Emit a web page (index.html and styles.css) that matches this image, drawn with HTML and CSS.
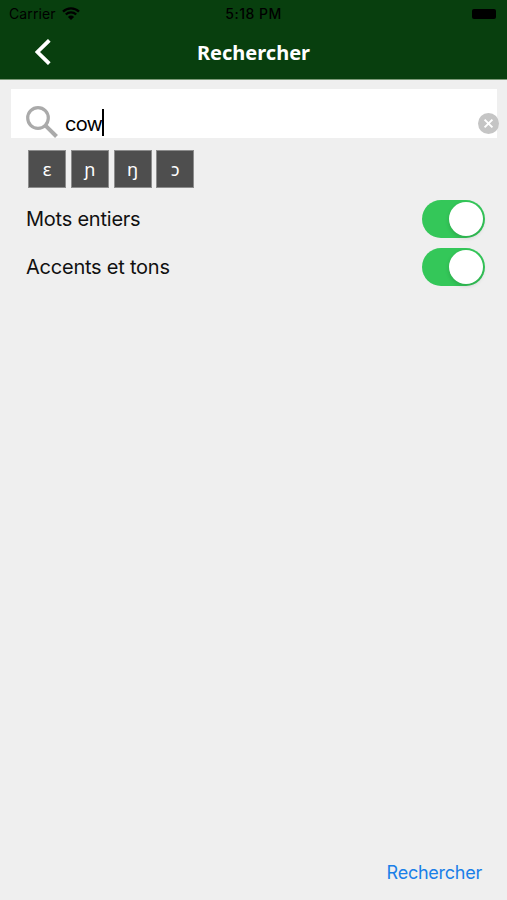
FILE: index.html
```html
<!DOCTYPE html>
<html lang="fr">
    <head>
        <meta charset="UTF-8">
        <meta name="viewport" content="width=device-width, initial-scale=1.0">
        <title>Rechercher</title>
        <link rel="stylesheet" href="styles.css">
    </head>
    <body>
        <header class="header">
            <div class="status-bar">
                <div class="carrier">
                    <span>Carrier</span>
                    <svg class="wifi" viewBox="0 0 18 13" width="18" height="13">
                        <path d="M1 4.6a11.5 11.5 0 0 1 16 0M3.8 7.5a7.4 7.4 0 0 1 10.4 0" fill="none" stroke="#000" stroke-width="2.3"/>
                        <path d="M9 13L5.9 9.9a4.4 4.4 0 0 1 6.2 0z" fill="#000"/>
                    </svg>
                </div>
                <span class="clock">5:18 PM</span>
                <div class="battery"></div>
            </div>
            <div class="title-bar">
                <a class="back" href="#" aria-label="Retour">
                    <svg viewBox="0 0 16 26" width="16" height="26">
                        <path d="M14.3 1.3L2.4 13l11.9 11.7" fill="none" stroke="#fff" stroke-width="3.8"/>
                    </svg>
                </a>
                <h1>Rechercher</h1>
            </div>
        </header>

        <main class="content">
            <div class="search-box">
                <svg class="search-icon" viewBox="0 0 32 32" width="32" height="32">
                    <circle cx="12" cy="12" r="10.3" fill="none" stroke="#aaa" stroke-width="3.2"/>
                    <path d="M19.8 19.8L30.5 30.5" stroke="#aaa" stroke-width="4"/>
                </svg>
                <span class="query">cow</span>
                <span class="caret"></span>
                <button class="clear-btn" aria-label="Effacer">
                    <svg viewBox="0 0 21 21" width="21" height="21">
                        <circle cx="10.5" cy="10.5" r="10.5" fill="#c5c5c5"/>
                        <path d="M6.6 6.6l7.8 7.8M14.4 6.6l-7.8 7.8" stroke="#fff" stroke-width="2"/>
                    </svg>
                </button>
            </div>

            <div class="keys">
                <button class="key">ɛ</button>
                <button class="key">ɲ</button>
                <button class="key">ŋ</button>
                <button class="key">ɔ</button>
            </div>

            <div class="option">
                <span>Mots entiers</span>
                <div class="switch"><div class="knob"></div></div>
            </div>
            <div class="option">
                <span>Accents et tons</span>
                <div class="switch"><div class="knob"></div></div>
            </div>
        </main>

        <footer class="footer">
            <a class="search-link" href="#">Rechercher</a>
        </footer>
    </body>
</html>
```
FILE: styles.css
```css
* {
    box-sizing: border-box;
}
body {
    margin: 0;
    height: 900px;
    display: flex;
    flex-direction: column;
    background-color: #efefef;
    color: #111;
    font-family: Inter, "Liberation Sans", sans-serif;
    overflow: hidden;
}
button {
    border: none;
    padding: 0;
    background: none;
}
.header {
    height: 80px;
    background-color: #083f0e;
    border-bottom: 1px solid #7c9a78;
}
.status-bar {
    display: grid;
    grid-template-columns: 1fr auto 1fr;
    align-items: center;
    height: 27px;
    padding: 0 11px 0 9px;
    color: #000;
    font-size: 14px;
    line-height: 27px;
}
.carrier {
    display: flex;
    align-items: center;
    gap: 6px;
    letter-spacing: 0.1px;
}
.clock {
    padding-left: 2px;
    font-weight: 500;
    font-size: 14px;
    letter-spacing: 0.5px;
}
.battery {
    justify-self: end;
    width: 24px;
    height: 10px;
    border-radius: 2px;
    background-color: #000;
}
.title-bar {
    display: grid;
    grid-template-columns: 1fr auto 1fr;
    align-items: center;
    height: 50px;
}
.back {
    display: flex;
    padding-left: 35px;
}
.title-bar h1 {
    margin: 0;
    color: #fff;
    font-family: "Noto Sans", sans-serif;
    font-size: 20px;
    font-weight: 700;
}
.content {
    flex: 1;
    padding-top: 9px;
}
.search-box {
    display: flex;
    align-items: flex-end;
    height: 49px;
    margin: 0 10px 0 11px;
    padding-left: 15px;
    background-color: #fff;
}
.search-icon {
    margin-right: 7px;
}
.query {
    color: #000;
    font-size: 20px;
    line-height: 28px;
    letter-spacing: -0.8px;
}
.caret {
    width: 2px;
    height: 27px;
    margin-bottom: 2px;
    background-color: #000;
}
.clear-btn {
    display: flex;
    margin: 0 -2px 4px auto;
}
.keys {
    display: flex;
    gap: 4.8px;
    padding: 12px 0 0 28px;
}
.key {
    width: 38px;
    height: 38px;
    border: 1px solid #8c8c8c;
    background-color: #4e4e4e;
    color: #fff;
    font-family: "Noto Sans", sans-serif;
    font-size: 18px;
}
.option {
    display: flex;
    align-items: center;
    justify-content: space-between;
    height: 38px;
    margin: 12px 22px 0 26px;
    font-size: 20px;
    letter-spacing: -0.23px;
}
.option + .option {
    margin-top: 10px;
}
.switch {
    display: flex;
    justify-content: flex-end;
    width: 63px;
    height: 38px;
    padding: 2px;
    border-radius: 19px;
    background-color: #34c759;
}
.knob {
    width: 34px;
    height: 34px;
    border-radius: 50%;
    background-color: #fff;
    box-shadow: 0 2px 4px rgba(0, 0, 0, 0.15);
}
.footer {
    display: flex;
    justify-content: flex-end;
    padding: 0 25px 15px 0;
}
.search-link {
    color: #1a7fe8;
    font-size: 18px;
    line-height: 24px;
    letter-spacing: -0.25px;
    text-decoration: none;
}
```
